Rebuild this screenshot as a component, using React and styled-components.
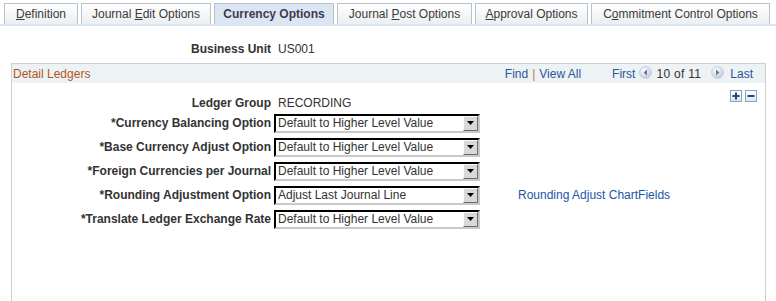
import React from 'react';
import styled, { createGlobalStyle } from 'styled-components';

const Global = createGlobalStyle`
body{
  margin:0;
  background:#fff;
  font-family:"Liberation Sans", Arial, sans-serif;
  font-size:12px;
  color:#333;
}
`;

const Page = styled.div`
padding-top:3px;
width:776px;
height:301px;
overflow:hidden;
`;

const TabBar = styled.div`
display:flex;
gap:3px;
padding-left:4px;
border-bottom:2px solid #dce6f2;
`;

const Tab = styled.div`
flex:0 0 auto;
width:${p => p.$w}px;
height:21px;
box-sizing:border-box;
display:flex;
align-items:center;
justify-content:center;
border:1px solid #b9c1cb;
border-bottom:none;
background:${p => p.$active ? '#dce6f2' : 'linear-gradient(#ffffff, #eceef0)'};
font-weight:${p => p.$active ? 'bold' : 'normal'};
color:${p => p.$active ? '#3c3c50' : '#3a3a3a'};
white-space:pre;
`;

const FieldRow = styled.div`
display:flex;
align-items:center;
height:${p => p.$h || 24}px;
`;

const Label = styled.div`
width:${p => p.$w}px;
text-align:right;
font-weight:bold;
color:#333;
white-space:nowrap;
`;

const Value = styled.div`
margin-left:7px;
color:#333;
`;

const TopRow = styled(FieldRow)`
margin-top:15px;
height:15px;
`;

const Box = styled.div`
margin:7px 0 0 11px;
width:755px;
height:260px;
border:1px solid #cfcfcf;
box-sizing:border-box;
`;

const BoxHead = styled.div`
height:19px;
background:#edf2f5;
display:flex;
align-items:center;
padding:0 12px 0 1px;
`;

const BoxTitle = styled.div`
color:#b2561a;
flex:1;
`;

const Nav = styled.div`
display:flex;
align-items:center;
color:#2b5797;
`;

const Sep = styled.span`
color:#c87333;
margin:0 4px;
`;

const Spacer = styled.span`
width:${p => p.$w}px;
display:inline-block;
`;

const Arrow = styled.svg`
width:13px;
height:13px;
margin:0 ${p => p.$r}px 3px ${p => p.$l}px;
`;

const Count = styled.span`
color:#333;
letter-spacing:0.3px;
`;

const ActionRow = styled.div`
display:flex;
justify-content:flex-end;
gap:3px;
padding:7px 8px 0 0;
height:12px;
margin-bottom:-7px;
`;

const IconBtn = styled.div`
width:12px;
height:12px;
box-sizing:border-box;
border:1px solid #8fa3b8;
background:linear-gradient(#ffffff,#dfe6ee);
display:flex;
align-items:center;
justify-content:center;
`;

const Form = styled.div``;

const Select = styled.div`
margin-left:3px;
width:206px;
height:19px;
box-sizing:border-box;
border:2px inset #d0d0d0;
border-top-color:#555;
border-left-color:#555;
border-bottom-color:#c9c9c9;
border-right-color:#c9c9c9;
background:#fff;
display:flex;
align-items:center;
padding-left:2px;
color:#333;
`;

const SelectText = styled.span`
flex:1;
white-space:nowrap;
overflow:hidden;
`;

const DropBtn = styled.div`
width:15px;
height:15px;
box-sizing:border-box;
background:#d8d8d8;
border:1px solid;
border-color:#fafafa #6b6b6b #6b6b6b #fafafa;
display:flex;
align-items:center;
justify-content:center;
`;

const Link = styled.a`
margin-left:38px;
color:#2156a8;
text-decoration:none;
`;

const tabs = [
  { pre: '', key: 'D', post: 'efinition', w: 74 },
  { pre: 'Journal ', key: 'E', post: 'dit Options', w: 130 },
  { pre: 'Currency Options', key: '', post: '', active: true, w: 120 },
  { pre: 'Journal ', key: 'P', post: 'ost Options', w: 135 },
  { pre: '', key: 'A', post: 'pproval Options', w: 113 },
  { pre: 'C', key: 'o', post: 'mmitment Control Options', w: 179 },
];

const rows = [
  { label: '*Currency Balancing Option', value: 'Default to Higher Level Value' },
  { label: '*Base Currency Adjust Option', value: 'Default to Higher Level Value' },
  { label: '*Foreign Currencies per Journal', value: 'Default to Higher Level Value' },
  { label: '*Rounding Adjustment Option', value: 'Adjust Last Journal Line', link: 'Rounding Adjust ChartFields' },
  { label: '*Translate Ledger Exchange Rate', value: 'Default to Higher Level Value' },
];

const RoundArrow = ({ dir, l, r }) => (
  <Arrow viewBox="0 0 12 12" $l={l} $r={r}>
    <defs>
      <radialGradient id={'g' + dir} cx="0.4" cy="0.35" r="0.7">
        <stop offset="0" stopColor="#ffffff" />
        <stop offset="1" stopColor="#b9c8d8" />
      </radialGradient>
    </defs>
    <circle cx="6" cy="6" r="5.5" fill={'url(#g' + dir + ')'} stroke="#c5d0dc" strokeWidth="0.8" />
    {dir === 'l'
      ? <path d="M7.3 3.3 L4.3 6 L7.3 8.7 Z" fill="#5a7594" />
      : <path d="M4.7 3.3 L7.7 6 L4.7 8.7 Z" fill="#5a7594" />}
  </Arrow>
);

const App = () => {
  return (
    <Page>
      <Global />
      <TabBar>
        {tabs.map((t, i) => (
          <Tab key={i} $active={t.active} $w={t.w}>
            <span>{t.pre}{t.key && <u>{t.key}</u>}{t.post}</span>
          </Tab>
        ))}
      </TabBar>

      <TopRow>
        <Label $w={271}>Business Unit</Label>
        <Value>US001</Value>
      </TopRow>

      <Box>
        <BoxHead>
          <BoxTitle>Detail Ledgers</BoxTitle>
          <Nav>
            Find<Sep>|</Sep>View All
            <Spacer $w={31} />
            First
            <RoundArrow dir="l" l={4} r={4} />
            <Count>10 of 11</Count>
            <RoundArrow dir="r" l={10} r={6} />
            Last
          </Nav>
        </BoxHead>

        <ActionRow>
          <IconBtn>
            <svg width="8" height="8" viewBox="0 0 8 8"><path d="M4 0.5V7.5M0.5 4H7.5" stroke="#1f4a86" strokeWidth="2" /></svg>
          </IconBtn>
          <IconBtn>
            <svg width="8" height="8" viewBox="0 0 8 8"><path d="M0.5 4H7.5" stroke="#1f4a86" strokeWidth="2" /></svg>
          </IconBtn>
        </ActionRow>

        <Form>
          <FieldRow $h={16}>
            <Label $w={259}>Ledger Group</Label>
            <Value>RECORDING</Value>
          </FieldRow>
          {rows.map((r, i) => (
            <FieldRow key={i} $h={24}>
              <Label $w={259}>{r.label}</Label>
              <Select>
                <SelectText>{r.value}</SelectText>
                <DropBtn>
                  <svg width="7" height="4" viewBox="0 0 7 4"><path d="M0 0H7L3.5 4Z" fill="#000" /></svg>
                </DropBtn>
              </Select>
              {r.link && <Link href="#">{r.link}</Link>}
            </FieldRow>
          ))}
        </Form>
      </Box>
    </Page>
  );
};

export default App;
